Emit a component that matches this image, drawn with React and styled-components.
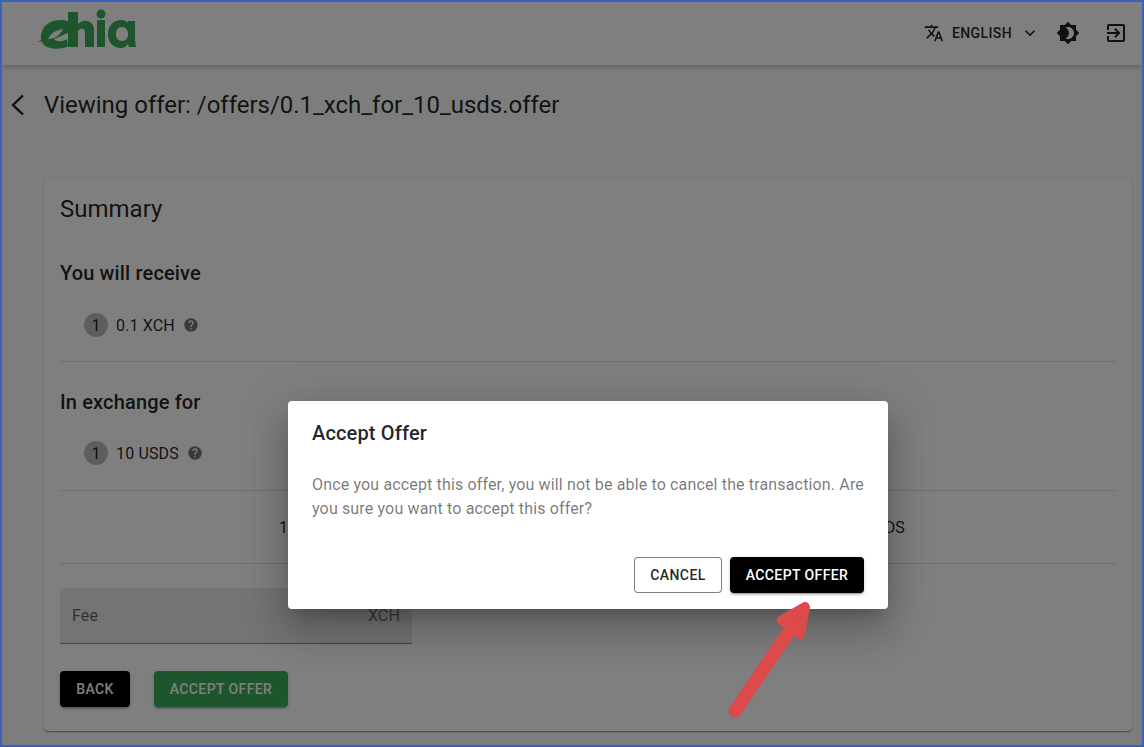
import React from "react";
import styled, { createGlobalStyle } from "styled-components";
import { MdTranslate, MdExpandMore, MdBrightness4, MdExitToApp, MdHelp } from "react-icons/md";

const GlobalStyle = createGlobalStyle`
  html, body {
    margin: 0;
    padding: 0;
    background: #fafafa;
  }
  * {
    box-sizing: border-box;
  }
`;

const Frame = styled.div`
  position: relative;
  width: 1144px;
  height: 747px;
  overflow: hidden;
  border: 2px solid #3b60c0;
  background: #fafafa;
  color: rgba(0, 0, 0, 0.87);
  font-family: Roboto, "Liberation Sans", sans-serif;
`;

const Header = styled.header`
  height: 63px;
  display: flex;
  align-items: center;
  justify-content: space-between;
  padding: 0 14px 0 35px;
  background: #fff;
  box-shadow: 0 2px 4px -1px rgba(0, 0, 0, 0.12), 0 4px 5px 0 rgba(0, 0, 0, 0.07),
    0 1px 10px 0 rgba(0, 0, 0, 0.06);
`;

const HeaderActions = styled.div`
  display: flex;
  align-items: center;
  padding-bottom: 2px;
`;

const LanguageButton = styled.div`
  display: flex;
  align-items: center;
  font-size: 14px;
  font-weight: 500;
  letter-spacing: 0.4px;
  svg:first-child {
    margin-right: 8px;
  }
  svg:last-child {
    margin-left: 8px;
  }
`;

const IconSlot = styled.div`
  display: flex;
  margin-left: ${(p) => p.$gap}px;
`;

const LogoMark = styled.svg`
  margin-bottom: 9px;
`;

const Page = styled.main`
  padding: 22px 10px 0 42px;
`;

const TitleRow = styled.div`
  position: relative;
  display: flex;
  align-items: center;
  height: 36px;
`;

const BackIcon = styled.svg`
  position: absolute;
  left: -34px;
  top: 7px;
`;

const Title = styled.h1`
  margin: 0;
  font-size: 24px;
  font-weight: 400;
  letter-spacing: -0.02px;
  line-height: 36px;
`;

const Card = styled.section`
  margin-top: 55px;
  height: 553px;
  padding: 16px;
  background: #fff;
  border-radius: 4px;
  box-shadow: 0 2px 1px -1px rgba(0, 0, 0, 0.2), 0 1px 1px 0 rgba(0, 0, 0, 0.14),
    0 1px 3px 0 rgba(0, 0, 0, 0.12);
`;

const CardTitle = styled.h2`
  margin: 0;
  font-size: 24px;
  font-weight: 400;
  line-height: 30px;
`;

const SectionTitle = styled.h3`
  margin: ${(p) => p.$top}px 0 0;
  font-size: 20px;
  font-weight: 500;
  letter-spacing: 0.15px;
  line-height: 28px;
`;

const AssetRow = styled.div`
  display: flex;
  align-items: center;
  margin-top: ${(p) => p.$top}px;
  padding-left: 24px;
  font-size: 16px;
  letter-spacing: 0.15px;
  height: 24px;
  svg {
    margin-left: 8px;
    color: rgba(0, 0, 0, 0.54);
  }
`;

const CountBadge = styled.span`
  width: 24px;
  height: 24px;
  margin-right: 8px;
  display: flex;
  align-items: center;
  justify-content: center;
  border-radius: 50%;
  background: #bdbdbd;
  font-size: 16px;
`;

const Divider = styled.hr`
  margin: ${(p) => p.$top}px 0 0;
  border: 0;
  border-top: 1px solid rgba(0, 0, 0, 0.12);
`;

const RateRow = styled.div`
  display: flex;
  justify-content: space-between;
  height: 72px;
  align-items: center;
  padding: 0 211px 0 219px;
  font-size: 16px;
  letter-spacing: 0.15px;
`;

const FeeField = styled.div`
  width: 352px;
  height: 56px;
  margin-top: 24px;
  padding: 0 12px;
  display: flex;
  align-items: center;
  justify-content: space-between;
  background: rgba(0, 0, 0, 0.09);
  border-bottom: 1px solid rgba(0, 0, 0, 0.42);
  border-radius: 4px 4px 0 0;
  font-size: 16px;
  letter-spacing: 0.15px;
`;

const FeeLabel = styled.span`
  color: rgba(0, 0, 0, 0.6);
`;

const FeeUnit = styled.span`
  color: rgba(0, 0, 0, 0.54);
`;

const ButtonRow = styled.div`
  display: flex;
  gap: 24px;
  margin-top: 27px;
`;

const Button = styled.button`
  height: 36px;
  width: ${(p) => p.$width || "auto"};
  padding: 0 15px;
  border: 0;
  border-radius: 4px;
  font-family: inherit;
  font-size: 14px;
  font-weight: 500;
  letter-spacing: 0.4px;
  color: #fff;
  background: ${(p) => (p.$variant === "green" ? "#3aac59" : "#000")};
  box-shadow: 0 3px 1px -2px rgba(0, 0, 0, 0.2), 0 2px 2px 0 rgba(0, 0, 0, 0.14),
    0 1px 5px 0 rgba(0, 0, 0, 0.12);
`;

const OutlineButton = styled(Button)`
  color: rgba(0, 0, 0, 0.87);
  background: #fff;
  border: 1px solid rgba(0, 0, 0, 0.5);
  box-shadow: none;
`;

const Backdrop = styled.div`
  position: absolute;
  inset: 0;
  display: flex;
  justify-content: center;
  padding: 399px 0 0 32px;
  background: rgba(0, 0, 0, 0.5);
`;

const Dialog = styled.div`
  width: 600px;
  height: 208px;
  background: #fff;
  border-radius: 4px;
  box-shadow: 0 11px 15px -7px rgba(0, 0, 0, 0.2), 0 24px 38px 3px rgba(0, 0, 0, 0.14),
    0 9px 46px 8px rgba(0, 0, 0, 0.12);
`;

const DialogTitle = styled.h2`
  margin: 0;
  padding: 16px 24px;
  font-size: 20px;
  font-weight: 500;
  letter-spacing: 0.15px;
  line-height: 32px;
`;

const DialogBody = styled.p`
  margin: 0;
  padding: 8px 24px 0;
  font-size: 16px;
  letter-spacing: 0.15px;
  line-height: 24px;
  color: rgba(0, 0, 0, 0.54);
`;

const DialogActions = styled.div`
  display: flex;
  justify-content: flex-end;
  gap: 8px;
  padding: 36px 24px 0;
`;

const Arrow = styled.svg`
  position: absolute;
  left: 716px;
  top: 588px;
`;

const ChiaLogo = () => (
  <LogoMark width="100" height="40" viewBox="0 0 100 40" fill="#3aac59">
    <path d="M33 13 C24 9 11 11 6 20 C2 28 4 35 10 38 C18 41 27 40 31 37 L30 30 C25 33 20 33 17 30 L31 24 Z" />
    <path d="M11 30 C14 24 19 21 26 20 C23 26 18 30 11 30 Z" fill="#fff" />
    <path d="M0 33 L9 29 L9 32 Z" />
    <rect x="31" y="3" width="10" height="35" />
    <path d="M41 15 C46 9 57 11 57 21 L57 38 L48 38 L48 23 C48 19 43 19 41 22 Z" />
    <rect x="60" y="11" width="8" height="27" />
    <circle cx="64" cy="5" r="4.5" />
    <path
      fillRule="evenodd"
      d="M85 11 C76 11 71 17 71 25 C71 33 76 39 84 39 C87 39 90 37 91 35 L92 38 L99 38 L98 31 L98 12 L91 12 L91 14 C89 12 87 11 85 11 Z M85 18 C89 18 91 21 91 25 C91 29 89 32 85 32 C81 32 79 29 79 25 C79 21 81 18 85 18 Z"
    />
  </LogoMark>
);

export default function App() {
  return (
    <Frame>
      <GlobalStyle />
      <Header>
        <ChiaLogo />
        <HeaderActions>
          <LanguageButton>
            <MdTranslate size={20} />
            ENGLISH
            <MdExpandMore size={20} />
          </LanguageButton>
          <IconSlot $gap={16}>
            <MdBrightness4 size={24} />
          </IconSlot>
          <IconSlot $gap={24}>
            <MdExitToApp size={24} />
          </IconSlot>
        </HeaderActions>
      </Header>
      <Page>
        <TitleRow>
          <BackIcon width="16" height="22" viewBox="0 0 16 22" fill="none" stroke="currentColor" strokeWidth="2.4">
            <path d="M13 1.5 L3 11 L13 20.5" />
          </BackIcon>
          <Title>Viewing offer: /offers/0.1_xch_for_10_usds.offer</Title>
        </TitleRow>
        <Card>
          <CardTitle>Summary</CardTitle>
          <SectionTitle $top={35}>You will receive</SectionTitle>
          <AssetRow $top={26}>
            <CountBadge>1</CountBadge>
            0.1 XCH
            <MdHelp size={16} />
          </AssetRow>
          <Divider $top={24} />
          <SectionTitle $top={26}>In exchange for</SectionTitle>
          <AssetRow $top={25}>
            <CountBadge>1</CountBadge>
            10 USDS
            <MdHelp size={16} />
          </AssetRow>
          <Divider $top={25} />
          <RateRow>
            <span>1 XCH = 100 USDS</span>
            <span>0.01 XCH = 1 USDS</span>
          </RateRow>
          <Divider $top={0} />
          <FeeField>
            <FeeLabel>Fee</FeeLabel>
            <FeeUnit>XCH</FeeUnit>
          </FeeField>
          <ButtonRow>
            <Button $width="70px">BACK</Button>
            <Button $variant="green" $width="134px">ACCEPT OFFER</Button>
          </ButtonRow>
        </Card>
      </Page>
      <Backdrop>
        <Dialog>
          <DialogTitle>Accept Offer</DialogTitle>
          <DialogBody>
            Once you accept this offer, you will not be able to cancel the transaction. Are you sure you want to accept this offer?
          </DialogBody>
          <DialogActions>
            <OutlineButton $width="88px">CANCEL</OutlineButton>
            <Button $width="134px">ACCEPT OFFER</Button>
          </DialogActions>
        </Dialog>
      </Backdrop>
      <Arrow width="100" height="130" viewBox="0 0 100 130" fill="none">
        <path d="M17 121 L74 37" stroke="#dc4a4a" strokeWidth="13" strokeLinecap="round" />
        <path d="M87 17 L64 30 L82 44 Z" fill="#dc4a4a" stroke="#dc4a4a" strokeWidth="10" strokeLinejoin="round" />
      </Arrow>
    </Frame>
  );
}
